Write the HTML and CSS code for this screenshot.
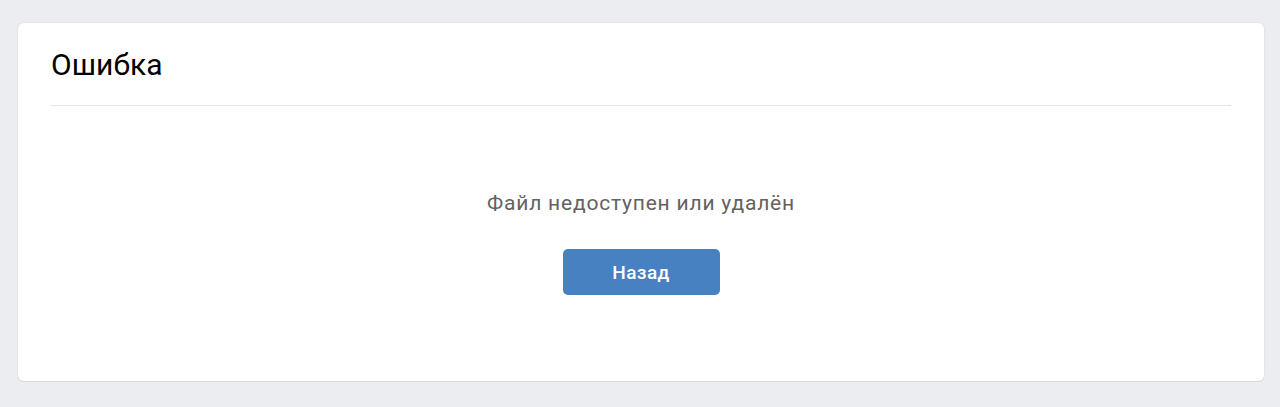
FILE: index.html
```html
<!DOCTYPE html>
<html lang="ru">
<head>
  <meta charset="UTF-8">
  <meta name="viewport" content="width=device-width, initial-scale=1.0">
  <title>Ошибка</title>
  <link rel="stylesheet" href="styles.css">
</head>
<body>
  <div class="card">
    <div class="card-header">
      <h1>Ошибка</h1>
    </div>
    <div class="card-body">
      <p class="message">Файл недоступен или удалён</p>
      <a href="#" class="button">Назад</a>
    </div>
  </div>
</body>
</html>
```

FILE: styles.css
```css
body {
  margin: 0;
  padding: 23px 16px 26px 18px;
  font-family: Roboto, "Noto Sans", Arial, sans-serif;
  background-color: #ebedf0;
  color: #000;
}

.card {
  background-color: #fff;
  border-radius: 6px;
  padding: 0 33px;
  box-shadow: 0 1px 0 0 #d7d8db, 0 0 0 1px #e3e4e8;
}

.card-header {
  padding: 24px 0 22px;
  border-bottom: 1px solid #e3e4e8;
}

h1 {
  margin: 0;
  font-size: 30px;
  font-weight: 400;
  line-height: 36px;
  letter-spacing: 0.1px;
}

.card-body {
  display: flex;
  flex-direction: column;
  align-items: center;
  padding: 85px 0 86px;
}

.message {
  margin: 0 0 34px;
  font-size: 21px;
  line-height: 24px;
  letter-spacing: 0.8px;
  color: #626262;
}

.button {
  display: flex;
  align-items: center;
  justify-content: center;
  width: 157px;
  height: 46px;
  background-color: #4781c1;
  color: #fff;
  border-radius: 5px;
  font-size: 19px;
  font-weight: 500;
  letter-spacing: 0.4px;
  text-decoration: none;
}
```
